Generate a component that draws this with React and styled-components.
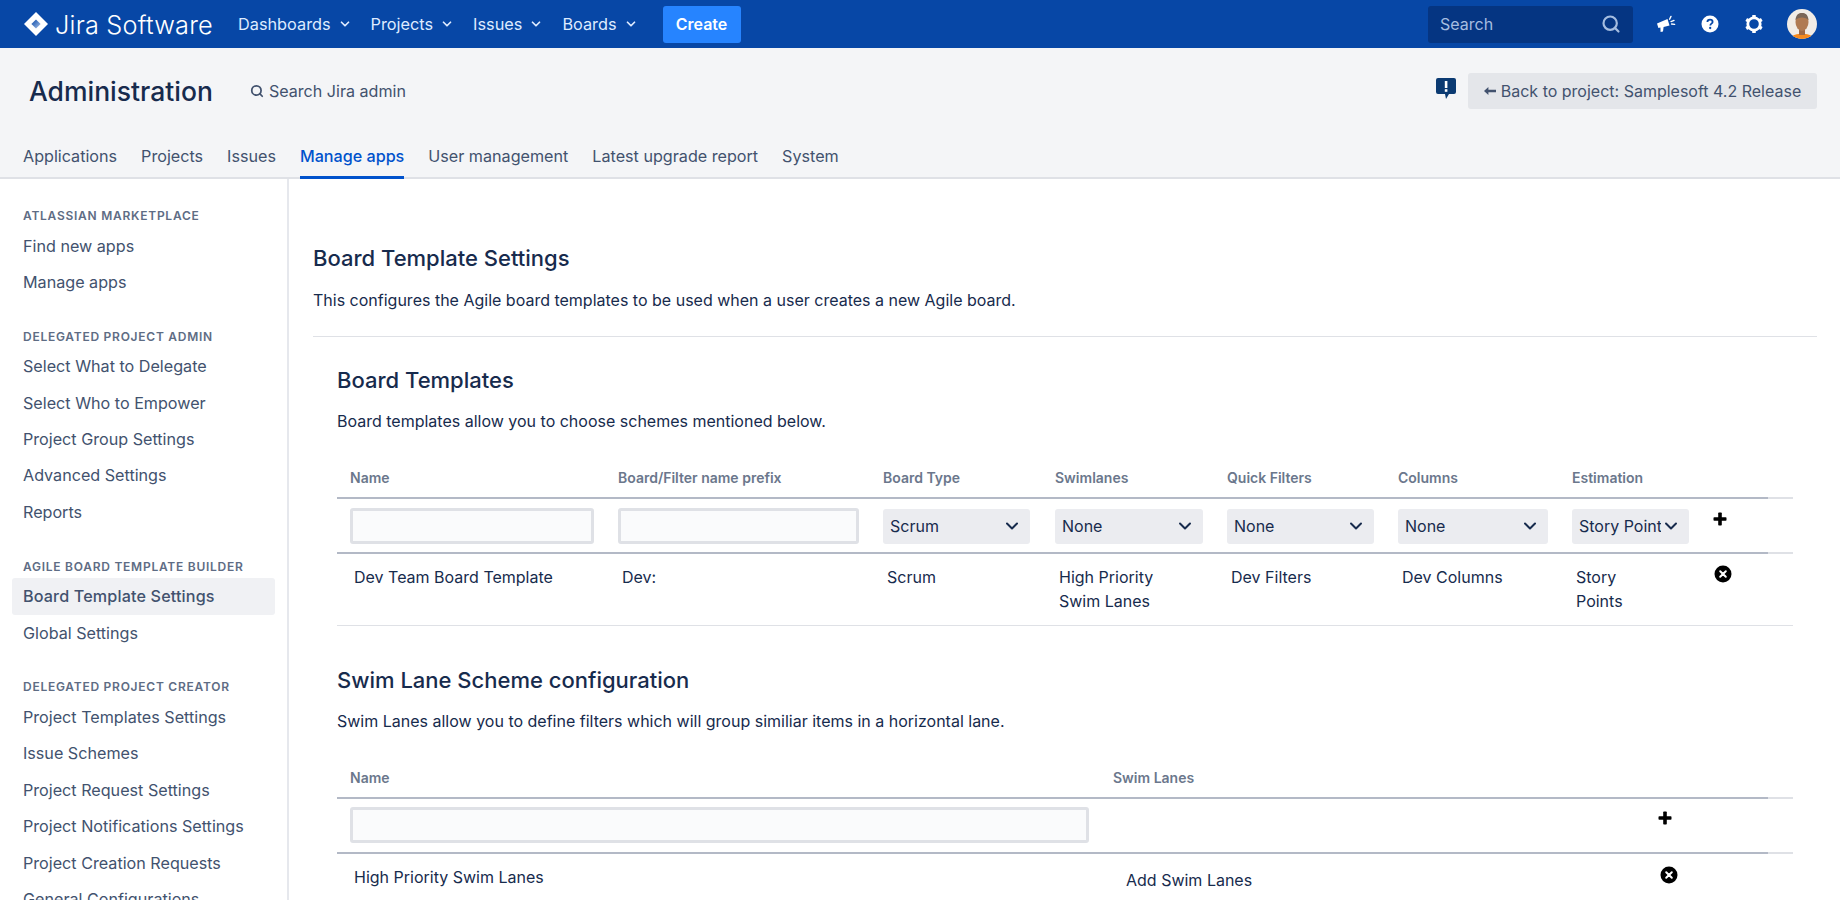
import styled, { createGlobalStyle } from 'styled-components';
import { ChevronDown, Search } from 'lucide-react';

const GlobalStyle = createGlobalStyle`
  html, body {
    margin: 0;
    height: 100%;
    overflow: hidden;
    background: #fff;
  }
  body {
    font-family: Inter, "Noto Sans", "Liberation Sans", sans-serif;
    font-size: 16px;
    color: #172b4d;
  }
  * { box-sizing: border-box; }
`;

const Page = styled.div`
  height: 100vh;
  overflow: hidden;
`;

// top bar
const TopBar = styled.header`
  height: 48px;
  background: #0747a6;
  display: flex;
  align-items: center;
  padding: 0 23px 0 24px;
  color: #deebff;
`;

const Logo = styled.div`
  display: flex;
  align-items: center;
  gap: 7px;
  width: 214px;
  color: #fff;
  font-size: 25.3px;
  font-weight: 300;
  letter-spacing: 0.2px;
  white-space: nowrap;
`;

const NavItem = styled.div`
  display: flex;
  align-items: center;
  margin-right: 19px;
  gap: 7px;
  font-size: 16.3px;
  white-space: nowrap;
`;

const CreateButton = styled.button`
  width: 78px;
  height: 37px;
  margin-left: 6px;
  border: none;
  border-radius: 3px;
  background: #2684ff;
  color: #fff;
  font: 600 16px Inter, sans-serif;
`;

const TopRight = styled.div`
  margin-left: auto;
  display: flex;
  align-items: center;
`;

const SearchBox = styled.div`
  width: 205px;
  height: 37px;
  padding: 0 12px;
  margin-right: 11px;
  border-radius: 3px;
  background: #053582;
  color: #a5bde0;
  font-size: 16px;
  display: flex;
  align-items: center;
  justify-content: space-between;
`;

const IconSlot = styled.div`
  width: 44px;
  display: flex;
  justify-content: center;
  align-items: center;
`;

const AvatarSlot = styled.div`
  width: 30px;
  height: 30px;
  margin-left: 11px;
`;

// admin header
const AdminHeader = styled.div`
  height: 131px;
  background: #f4f5f7;
  border-bottom: 2px solid #dfe1e6;
  display: flex;
  flex-direction: column;
`;

const AdminTop = styled.div`
  height: 98px;
  padding: 25px 23px 0 29px;
  display: flex;
  align-items: flex-start;
`;

const AdminTitle = styled.h1`
  margin: 0 37px 0 0;
  font-size: 26.5px;
  line-height: 36px;
  font-weight: 500;
  color: #172b4d;
  white-space: nowrap;
`;

const AdminSearch = styled.div`
  display: flex;
  align-items: center;
  gap: 5px;
  height: 36px;
  color: #42526e;
  font-size: 16.1px;
`;

const BackButton = styled.button`
  margin-left: 12px;
  width: 349px;
  height: 36px;
  border: none;
  border-radius: 3px;
  background: #e4e6ea;
  color: #42526e;
  display: flex;
  align-items: center;
  justify-content: center;
  gap: 5px;
  font: 400 16px Inter, sans-serif;
  white-space: nowrap;
`;

const Feedback = styled.div`
  margin-left: auto;
  padding-top: 5px;
`;

const Tabs = styled.nav`
  display: flex;
  gap: 24px;
  padding-left: 23px;
  height: 33px;
`;

const Tab = styled.a`
  height: 35px;
  line-height: 24px;
  font-size: 16.15px;
  white-space: nowrap;
  color: ${(p) => (p.$active ? '#0052cc' : '#42526e')};
  font-weight: ${(p) => (p.$active ? 500 : 400)};
  border-bottom: 3px solid ${(p) => (p.$active ? '#0052cc' : 'transparent')};
`;

// body
const Body = styled.div`
  display: flex;
`;

const Sidebar = styled.aside`
  width: 289px;
  flex: none;
  border-right: 2px solid #e6e8ed;
  padding: 27px 12px 0;
  min-height: 800px;
`;

const SideGroup = styled.div`
  margin-bottom: 26.3px;
`;

const SideLabel = styled.div`
  padding-left: 11px;
  font-size: 12px;
  line-height: 20px;
  font-weight: 600;
  letter-spacing: 0.74px;
  color: #5e6c84;
  margin-bottom: 1.5px;
  text-transform: uppercase;
  white-space: nowrap;
`;

const SideItem = styled.div`
  height: 36.45px;
  line-height: 36px;
  padding-left: 11px;
  border-radius: 3px;
  font-size: 16.15px;
  white-space: nowrap;
  color: #42526e;
  background: ${(p) => (p.$active ? '#f0f1f4' : 'transparent')};
  font-weight: ${(p) => (p.$active ? 500 : 400)};
  letter-spacing: ${(p) => (p.$active ? '0.15px' : 'normal')};
`;

const Main = styled.main`
  flex: 1;
  padding: 65px 23px 0 24px;
  min-width: 0;
`;

const PageTitle = styled.h2`
  margin: 0;
  font-size: 22px;
  line-height: 28px;
  font-weight: 500;
  color: #172b4d;
`;

const Intro = styled.p`
  margin: ${(p) => p.$top || 15}px 0 0;
  line-height: 24px;
  font-size: 16px;
  color: #172b4d;
`;

const Divider = styled.hr`
  margin: 24px 0 0;
  border: none;
  border-top: 1px solid #dfe1e6;
`;

const Section = styled.section`
  padding: ${(p) => p.$top}px 24px 0;
`;

const Table = styled.table`
  width: 1456px;
  margin-top: 25px;
  border-collapse: collapse;
  table-layout: fixed;
`;

const HeadCell = styled.th`
  height: 40px;
  padding: 0 0 9px 13px;
  text-align: left;
  vertical-align: bottom;
  font-size: 14px;
  line-height: 20px;
  font-weight: 600;
  color: #6b778c;
  border-bottom: 2px solid ${(p) => (p.$light ? '#dfe1e6' : '#b3b9c6')};
  white-space: nowrap;
`;

const FormCell = styled.td`
  height: 55px;
  padding: 0 0 0 13px;
  vertical-align: middle;
  border-bottom: 2px solid ${(p) => (p.$light ? '#dfe1e6' : '#b3b9c6')};
`;

const RowCell = styled.td`
  padding: 11px 4px 11.5px 17px;
  vertical-align: top;
  font-size: 16px;
  line-height: 24px;
  color: #172b4d;
  border-bottom: ${(p) => (p.$noBorder ? 'none' : '1px solid #dfe1e6')};
`;

const TextInput = styled.input`
  display: block;
  width: ${(p) => p.$width}px;
  height: 36px;
  border: 3px solid #dfe1e6;
  border-radius: 3px;
  background: #fafbfc;
  outline: none;
`;

const Select = styled.div`
  width: ${(p) => p.$width}px;
  height: 35px;
  margin-top: 1px;
  padding: 0 8px 0 7px;
  border-radius: 3px;
  background: #ebecf0;
  display: flex;
  align-items: center;
  justify-content: space-between;
  font-size: 16px;
  color: #172b4d;
  overflow: hidden;
`;

const SelectText = styled.span`
  white-space: nowrap;
  overflow: hidden;
  flex: 1;
`;

const ActionIcon = styled.div`
  margin-top: ${(p) => p.$top || 0}px;
  margin-left: ${(p) => p.$left || 0}px;
  line-height: 0;
`;

const AddLanes = styled.div`
  padding: 3px 0 0 9px;
`;

const JiraMark = () => (
  <svg width="24" height="24" viewBox="0 0 24 24">
    <defs>
      <linearGradient id="jira-core" x1="0" y1="0" x2="1" y2="1">
        <stop offset="0" stopColor="#0747a6" />
        <stop offset="1" stopColor="#a9c3ea" />
      </linearGradient>
    </defs>
    <path d="M12 0 L24 12 L12 24 L0 12 Z" fill="#fff" />
    <path d="M12 7.4 L16.6 12 L12 16.6 L7.4 12 Z" fill="url(#jira-core)" />
  </svg>
);

const Megaphone = () => (
  <svg width="20" height="20" viewBox="0 0 20 20" fill="#fff">
    <path d="M1 9.5 L11.5 5 L13.5 11.5 L7.6 13 L7 17.5 L4.6 18 L4.4 13.6 L2.4 14 Z" />
    <path d="M13.6 5.2 L15 2.4 M15 7.6 L18 6.4 M15.6 10 L18.6 10.4" stroke="#fff" strokeWidth="1.4" strokeLinecap="round" />
  </svg>
);

const HelpIcon = () => (
  <svg width="20" height="20" viewBox="0 0 20 20">
    <circle cx="10" cy="10" r="8.5" fill="#fff" />
    <path d="M7.4 8 C7.4 6.4 8.6 5.6 10 5.6 C11.5 5.6 12.6 6.5 12.6 7.9 C12.6 9.6 10.3 9.7 10.3 11.4" fill="none" stroke="#0747a6" strokeWidth="1.8" />
    <circle cx="10.2" cy="14" r="1.15" fill="#0747a6" />
  </svg>
);

const GearIcon = () => (
  <svg width="20" height="20" viewBox="0 0 20 20">
    <circle cx="10" cy="10" r="6.2" fill="none" stroke="#fff" strokeWidth="2.8" />
    <g fill="#fff">
      <rect x="8.2" y="1" width="3.6" height="3" rx="0.6" />
      <rect x="8.2" y="16" width="3.6" height="3" rx="0.6" />
      <rect x="8.2" y="1" width="3.6" height="3" rx="0.6" transform="rotate(60 10 10)" />
      <rect x="8.2" y="1" width="3.6" height="3" rx="0.6" transform="rotate(120 10 10)" />
      <rect x="8.2" y="1" width="3.6" height="3" rx="0.6" transform="rotate(240 10 10)" />
      <rect x="8.2" y="1" width="3.6" height="3" rx="0.6" transform="rotate(300 10 10)" />
    </g>
  </svg>
);

const Avatar = () => (
  <svg width="30" height="30" viewBox="0 0 30 30">
    <defs>
      <clipPath id="avatar-clip">
        <circle cx="15" cy="15" r="15" />
      </clipPath>
    </defs>
    <g clipPath="url(#avatar-clip)">
      <rect width="30" height="30" fill="#f1ece6" />
      <path d="M4 30 C5 25 10 25 15 25 C20 25 25 25 26 30 Z" fill="#f58a1f" />
      <rect x="12" y="19" width="6" height="7" fill="#a06a45" />
      <ellipse cx="15" cy="13" rx="6.5" ry="9" fill="#b07a52" />
      <path d="M8.5 11 C9 5 12 4 15 4 C18 4 21 5 21.5 11 C19 7.5 11 7.5 8.5 11 Z" fill="#7a6658" />
    </g>
  </svg>
);

const FeedbackIcon = () => (
  <svg width="20" height="22" viewBox="0 0 20 22">
    <path d="M2 0 H18 A2 2 0 0 1 20 2 V14 A2 2 0 0 1 18 16 H13 L10 21 L9 16 H2 A2 2 0 0 1 0 14 V2 A2 2 0 0 1 2 0 Z" fill="#0b3a72" />
    <rect x="8.8" y="3" width="2.6" height="7" fill="#fff" />
    <rect x="8.8" y="11.2" width="2.6" height="2.6" fill="#fff" />
  </svg>
);

const BackArrow = () => (
  <svg width="12" height="10" viewBox="0 0 12 10" fill="#42526e">
    <path d="M0 5 L4.4 1 V3.8 H12 V6.2 H4.4 V9 Z" />
  </svg>
);

const PlusIcon = () => (
  <svg width="14" height="14" viewBox="0 0 14 14" fill="#000">
    <rect x="5.2" y="0.5" width="3.6" height="13" rx="0.8" />
    <rect x="0.5" y="5.2" width="13" height="3.6" rx="0.8" />
  </svg>
);

const RemoveIcon = () => (
  <svg width="18" height="18" viewBox="0 0 18 18">
    <circle cx="9" cy="9" r="8.5" fill="#000" />
    <path d="M6.2 6.2 L11.8 11.8 M11.8 6.2 L6.2 11.8" stroke="#fff" strokeWidth="2" strokeLinecap="round" />
  </svg>
);

const navItems = ['Dashboards', 'Projects', 'Issues', 'Boards'];
const tabs = ['Applications', 'Projects', 'Issues', 'Manage apps', 'User management', 'Latest upgrade report', 'System'];

const sideGroups = [
  { label: 'Atlassian Marketplace', items: ['Find new apps', 'Manage apps'] },
  {
    label: 'Delegated Project Admin',
    items: ['Select What to Delegate', 'Select Who to Empower', 'Project Group Settings', 'Advanced Settings', 'Reports'],
  },
  { label: 'Agile Board Template Builder', items: ['Board Template Settings', 'Global Settings'] },
  {
    label: 'Delegated Project Creator',
    items: [
      'Project Templates Settings',
      'Issue Schemes',
      'Project Request Settings',
      'Project Notifications Settings',
      'Project Creation Requests',
      'General Configurations',
    ],
  },
];

const boardCols = [268, 265, 172, 172, 171, 174, 144, 65, 25];
const boardHeads = ['Name', 'Board/Filter name prefix', 'Board Type', 'Swimlanes', 'Quick Filters', 'Columns', 'Estimation'];
const boardSelects = [
  ['Scrum', 147],
  ['None', 148],
  ['None', 147],
  ['None', 150],
  ['Story Points', 117],
];

export default function App() {
  return (
    <Page>
      <GlobalStyle />
      <TopBar>
        <Logo>
          <JiraMark />
          Jira Software
        </Logo>
        {navItems.map((item) => (
          <NavItem key={item}>
            {item}
            <ChevronDown size={14} strokeWidth={3} />
          </NavItem>
        ))}
        <CreateButton>Create</CreateButton>
        <TopRight>
          <SearchBox>
            Search
            <Search size={20} strokeWidth={2.6} />
          </SearchBox>
          <IconSlot><Megaphone /></IconSlot>
          <IconSlot><HelpIcon /></IconSlot>
          <IconSlot><GearIcon /></IconSlot>
          <AvatarSlot><Avatar /></AvatarSlot>
        </TopRight>
      </TopBar>

      <AdminHeader>
        <AdminTop>
          <AdminTitle>Administration</AdminTitle>
          <AdminSearch>
            <Search size={14} strokeWidth={3} />
            Search Jira admin
          </AdminSearch>
          <Feedback><FeedbackIcon /></Feedback>
          <BackButton>
            <BackArrow />
            Back to project: Samplesoft 4.2 Release
          </BackButton>
        </AdminTop>
        <Tabs>
          {tabs.map((tab) => (
            <Tab key={tab} $active={tab === 'Manage apps'}>{tab}</Tab>
          ))}
        </Tabs>
      </AdminHeader>

      <Body>
        <Sidebar>
          {sideGroups.map((group) => (
            <SideGroup key={group.label}>
              <SideLabel>{group.label}</SideLabel>
              {group.items.map((item) => (
                <SideItem key={item} $active={item === 'Board Template Settings'}>{item}</SideItem>
              ))}
            </SideGroup>
          ))}
        </Sidebar>

        <Main>
          <PageTitle>Board Template Settings</PageTitle>
          <Intro $top={16}>This configures the Agile board templates to be used when a user creates a new Agile board.</Intro>
          <Divider />

          <Section $top={29}>
            <PageTitle>Board Templates</PageTitle>
            <Intro>Board templates allow you to choose schemes mentioned below.</Intro>
            <Table>
              <colgroup>
                {boardCols.map((w, i) => <col key={i} width={w} />)}
              </colgroup>
              <thead>
                <tr>
                  {boardHeads.map((h) => <HeadCell key={h}>{h}</HeadCell>)}
                  <HeadCell />
                  <HeadCell $light />
                </tr>
              </thead>
              <tbody>
                <tr>
                  <FormCell><TextInput $width={244} /></FormCell>
                  <FormCell><TextInput $width={241} /></FormCell>
                  {boardSelects.map(([value, width], i) => (
                    <FormCell key={i}>
                      <Select $width={width}>
                        <SelectText>{value}</SelectText>
                        <ChevronDown size={20} strokeWidth={2.4} />
                      </Select>
                    </FormCell>
                  ))}
                  <FormCell>
                    <ActionIcon $top={-14} $left={-3}><PlusIcon /></ActionIcon>
                  </FormCell>
                  <FormCell $light />
                </tr>
                <tr>
                  <RowCell>Dev Team Board Template</RowCell>
                  <RowCell>Dev:</RowCell>
                  <RowCell>Scrum</RowCell>
                  <RowCell>High Priority<br />Swim Lanes</RowCell>
                  <RowCell>Dev Filters</RowCell>
                  <RowCell>Dev Columns</RowCell>
                  <RowCell>Story<br />Points</RowCell>
                  <RowCell><ActionIcon $top={0} $left={-6}><RemoveIcon /></ActionIcon></RowCell>
                  <RowCell />
                </tr>
              </tbody>
            </Table>
          </Section>

          <Section $top={40}>
            <PageTitle>Swim Lane Scheme configuration</PageTitle>
            <Intro>Swim Lanes allow you to define filters which will group similiar items in a horizontal lane.</Intro>
            <Table>
              <colgroup>
                <col width={763} />
                <col width={550} />
                <col width={118} />
                <col width={25} />
              </colgroup>
              <thead>
                <tr>
                  <HeadCell>Name</HeadCell>
                  <HeadCell>Swim Lanes</HeadCell>
                  <HeadCell />
                  <HeadCell $light />
                </tr>
              </thead>
              <tbody>
                <tr>
                  <FormCell><TextInput $width={739} /></FormCell>
                  <FormCell />
                  <FormCell><ActionIcon $top={-14} $left={-5}><PlusIcon /></ActionIcon></FormCell>
                  <FormCell $light />
                </tr>
                <tr>
                  <RowCell $noBorder>High Priority Swim Lanes</RowCell>
                  <RowCell $noBorder><AddLanes>Add Swim Lanes</AddLanes></RowCell>
                  <RowCell $noBorder><ActionIcon $top={1} $left={-7}><RemoveIcon /></ActionIcon></RowCell>
                  <RowCell $noBorder />
                </tr>
              </tbody>
            </Table>
          </Section>
        </Main>
      </Body>
    </Page>
  );
}
